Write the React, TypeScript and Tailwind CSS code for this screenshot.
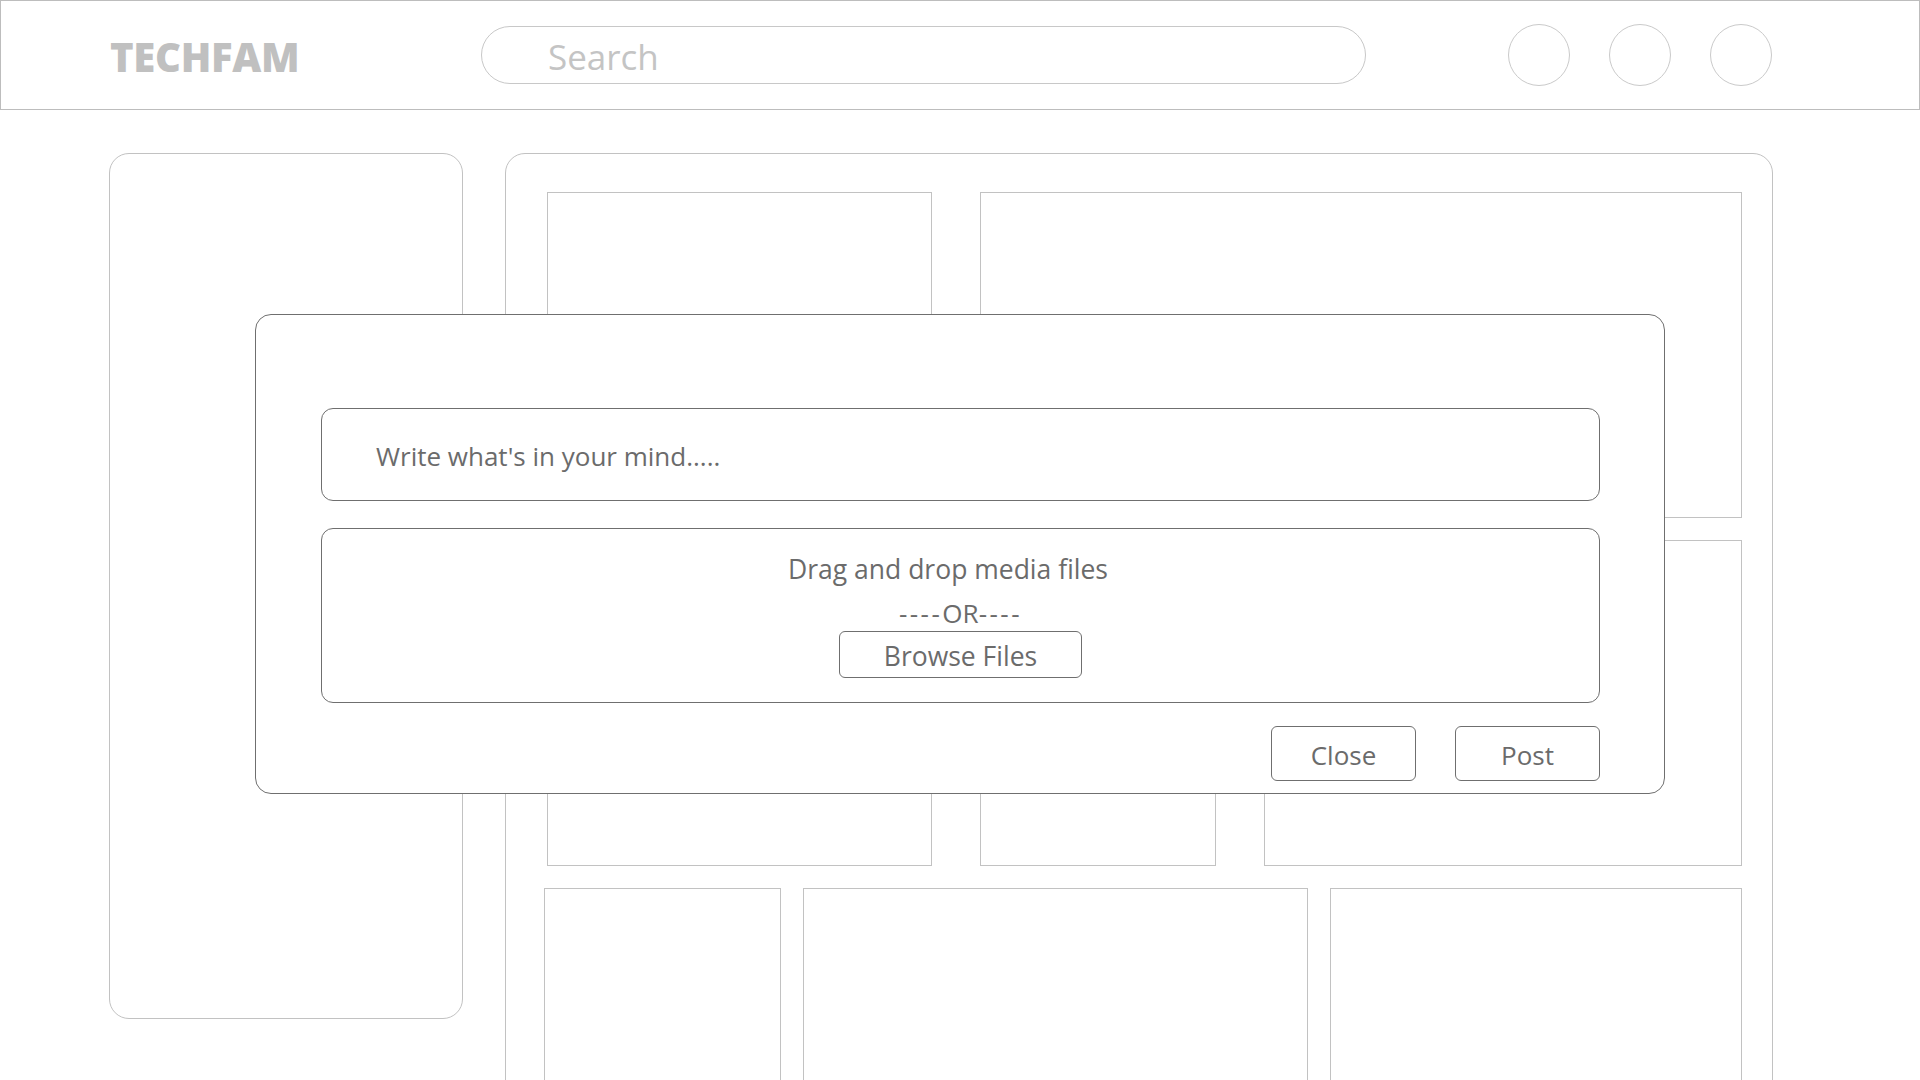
import React from 'react'

const font = { fontFamily: '"Open Sans", "Noto Sans", sans-serif' }

function Box({ className = '' }: { className?: string }) {
  return <div className={`border border-[#c2c2c2] bg-white ${className}`} />
}

export default function App() {
  return (
    <div className="relative h-screen w-full overflow-hidden bg-white" style={font}>
      {/* Header */}
      <header className="flex h-[110px] items-center border border-[#bdbdbd] pr-[147px]">
        <div className="w-[480px] pl-[109px] pt-[3px]">
          <span className="text-[40px] font-extrabold tracking-[-0.3px] text-[#c0c0c0]">TECHFAM</span>
        </div>
        <div className="flex h-[58px] w-[885px] items-center rounded-full border border-[#c8c8c8] pl-[66px] pt-[4px]">
          <span className="text-[35px] text-[#c4c4c4]">Search</span>
        </div>
        <div className="ml-auto flex items-center gap-[39px]">
          <div className="h-[62px] w-[62px] rounded-full border border-[#cacaca]" />
          <div className="h-[62px] w-[62px] rounded-full border border-[#cacaca]" />
          <div className="h-[62px] w-[62px] rounded-full border border-[#cacaca]" />
        </div>
      </header>

      {/* Body */}
      <div className="flex items-start pl-[109px] pt-[43px]">
        <aside className="h-[866px] w-[354px] rounded-[20px] border border-[#c2c2c2]" />

        <main className="ml-[42px] h-[1000px] w-[1268px] rounded-[20px] border border-[#c2c2c2] pl-[41px] pt-[38px]">
          <div className="flex gap-[48px]">
            <Box className="h-[674px] w-[385px]" />
            <div className="flex w-[762px] flex-col gap-[22px]">
              <Box className="h-[326px] w-full" />
              <div className="flex gap-[48px]">
                <Box className="h-[326px] w-[236px]" />
                <Box className="h-[326px] w-[478px]" />
              </div>
            </div>
          </div>
          <div className="-ml-[3px] mt-[22px] flex gap-[22px]">
            <Box className="h-[300px] w-[237px]" />
            <Box className="h-[300px] w-[505px]" />
            <Box className="h-[300px] w-[412px]" />
          </div>
        </main>
      </div>

      {/* Create post modal */}
      <div className="absolute left-[255px] top-[314px] flex h-[480px] w-[1410px] flex-col rounded-[16px] border border-[#6f6f6f] bg-white pl-[65px] pr-[64px] pt-[93px] text-[#6b6b6b]">
        <div className="flex h-[93px] w-full items-center rounded-[12px] border border-[#6f6f6f] pl-[54px] pt-[4px]">
          <span className="text-[26px]">Write what's in your mind.....</span>
        </div>

        <div className="mt-[27px] flex h-[175px] w-full flex-col items-center rounded-[12px] border border-[#6f6f6f] pt-[23px]">
          <span className="mr-[25px] text-[26.5px] leading-[35px]">Drag and drop media files</span>
          <span className="mt-[9px] text-[26px] leading-[35px]">
            <span className="tracking-[2.5px]">----</span>OR<span className="tracking-[2.5px]">----</span>
          </span>
          <button className="flex h-[47px] w-[243px] items-center justify-center rounded-[6px] border border-[#6f6f6f] pt-[4px] text-[26.5px] leading-[35px]">
            Browse Files
          </button>
        </div>

        <div className="mt-[23px] flex justify-end gap-[39px]">
          <button className="flex h-[55px] w-[145px] items-center justify-center rounded-[6px] border border-[#6f6f6f] pt-[4px] text-[26px]">
            Close
          </button>
          <button className="flex h-[55px] w-[145px] items-center justify-center rounded-[6px] border border-[#6f6f6f] pt-[4px] text-[26px]">
            Post
          </button>
        </div>
      </div>
    </div>
  )
}
